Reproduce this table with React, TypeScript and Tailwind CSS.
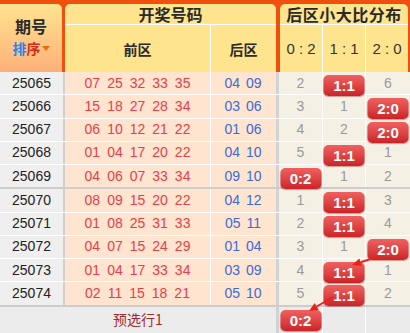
import React from "react";

type Cell = string | number;

interface Row {
  id: string;
  front: string[];
  back: string[];
  dist: Cell[];
}

const rows: Row[] = [
  { id: "25065", front: ["07", "25", "32", "33", "35"], back: ["04", "09"], dist: [2, "1:1", 6] },
  { id: "25066", front: ["15", "18", "27", "28", "34"], back: ["03", "06"], dist: [3, 1, "2:0"] },
  { id: "25067", front: ["06", "10", "12", "21", "22"], back: ["01", "06"], dist: [4, 2, "2:0"] },
  { id: "25068", front: ["01", "04", "17", "20", "22"], back: ["04", "10"], dist: [5, "1:1", 1] },
  { id: "25069", front: ["04", "06", "07", "33", "34"], back: ["09", "10"], dist: ["0:2", 1, 2] },
  { id: "25070", front: ["08", "09", "15", "20", "22"], back: ["04", "12"], dist: [1, "1:1", 3] },
  { id: "25071", front: ["01", "08", "25", "31", "33"], back: ["05", "11"], dist: [2, "1:1", 4] },
  { id: "25072", front: ["04", "07", "15", "24", "29"], back: ["01", "04"], dist: [3, 1, "2:0"] },
  { id: "25073", front: ["01", "04", "17", "33", "34"], back: ["03", "09"], dist: [4, "1:1", 1] },
  { id: "25074", front: ["02", "11", "15", "18", "21"], back: ["05", "10"], dist: [5, "1:1", 2] },
];

function Badge({ text }: { text: string }) {
  return (
    <span className="absolute left-1/2 top-[3px] z-10 flex h-[21px] w-[41px] -translate-x-1/2 items-center justify-center rounded-[5px] bg-linear-to-b from-[#f0605f] to-[#cb2228] text-[15px] font-bold leading-none text-white shadow-[0_1px_1px_rgba(120,0,0,0.35)]">
      {text}
    </span>
  );
}

function DistCell({ value, className }: { value: Cell; className: string }) {
  const isBadge = typeof value === "string" && value.includes(":");
  return (
    <div className={`relative flex items-center justify-center text-[14px] text-[#9a9a9a] ${className}`}>
      {isBadge ? <Badge text={value as string} /> : value}
    </div>
  );
}

export default function App() {
  return (
    <div className="relative h-[333px] w-[410px] overflow-hidden bg-white font-['Liberation_Sans','Noto_Sans_CJK_SC',sans-serif]">
      {/* 表頭 */}
      <div className="flex h-[72px] bg-[#f04f0d] pt-[4px]">
        <div className="mr-[3px] flex w-[62px] flex-col items-center rounded-tr-[5px] bg-linear-to-b from-[#ffe48e] to-[#fdb07a] pt-[10px] font-['Noto_Sans_CJK_SC',sans-serif]">
          <div className="text-[16px] font-bold text-[#2a2a2a]">期号</div>
          <div className="flex items-center text-[14px] font-bold">
            <span className="text-[#1e88f0]">排</span>
            <span className="text-[#d42a1e]">序</span>
            <span className="ml-[1px] h-0 w-0 border-x-[4px] border-t-[5px] border-x-transparent border-t-[#f06a10]" />
          </div>
        </div>

        <div className="mr-[4px] flex w-[211px] flex-col rounded-t-[5px] bg-[#ffe48e]">
          <div className="flex h-[21px] items-center justify-center border-b border-white text-[16px] font-bold text-[#2a2a2a] font-['Noto_Sans_CJK_SC',sans-serif]">
            开奖号码
          </div>
          <div className="flex flex-1 text-[14px] font-bold text-[#2a2a2a] font-['Noto_Sans_CJK_SC',sans-serif]">
            <div className="flex w-[146px] items-center justify-center border-r border-white pt-[2px]">前区</div>
            <div className="flex flex-1 items-center justify-center pt-[2px]">后区</div>
          </div>
        </div>

        <div className="flex w-[128px] flex-col rounded-t-[5px] bg-[#ffe48e]">
          <div className="flex h-[21px] items-center justify-center border-b border-white text-[16px] font-bold tracking-[0.5px] text-[#2a2a2a] font-['Noto_Sans_CJK_SC',sans-serif]">
            后区小大比分布
          </div>
          <div className="flex flex-1 text-[15px] text-[#333]">
            <div className="flex w-[43px] items-center justify-center border-r border-white pt-[2px]">0 : 2</div>
            <div className="flex w-[43px] items-center justify-center border-r border-white pt-[2px]">1 : 1</div>
            <div className="flex flex-1 items-center justify-center pt-[2px]">2 : 0</div>
          </div>
        </div>
      </div>

      {/* 資料列 */}
      {rows.map((row, index) => {
        const groupEnd = index % 5 === 4;
        return (
          <div
            key={row.id}
            className={`flex ${groupEnd ? "h-[24.25px] border-b-2 border-[#cdcdcd]" : "h-[23.25px] border-b border-white"}`}
          >
            <div className="flex w-[65px] items-center justify-center border-r-2 border-[#cfcfcf] bg-[#efefef] text-[14px] text-[#222]">
              {row.id}
            </div>
            <div className="flex w-[146px] items-center justify-center gap-[7px] border-r border-white bg-[#ffe4d0] text-[14px] text-[#e5404a]">
              {row.front.map((n, i) => (
                <span key={i}>{n}</span>
              ))}
            </div>
            <div className="flex w-[68px] items-center justify-center gap-[6px] border-r-[3px] border-[#d2d2d2] bg-[#ffe4d0] pr-[1px] text-[14px] text-[#3a6cd4]">
              {row.back.map((n, i) => (
                <span key={i}>{n}</span>
              ))}
            </div>
            <DistCell value={row.dist[0]} className="w-[44px] border-r border-white bg-[#f5f0e4]" />
            <DistCell value={row.dist[1]} className="w-[43px] border-r border-white bg-[#f5f0e4]" />
            <DistCell value={row.dist[2]} className="flex-1 bg-[#f5f0e4]" />
          </div>
        );
      })}

      {/* 預選行 */}
      <div className="flex h-[27px]">
        <div className="flex w-[276px] items-center justify-center bg-[#ececec] pb-[2px] text-[14px] text-[#a52a2a] font-['Noto_Sans_CJK_SC',sans-serif]">
          预选行1
        </div>
        <div className="w-[3px] bg-[#d2d2d2]" />
        <DistCell value="0:2" className="w-[44px] border-r border-white bg-[#ebebeb]" />
        <DistCell value="" className="w-[43px] border-r border-white bg-[#ebebeb]" />
        <DistCell value="" className="flex-1 bg-[#ebebeb]" />
      </div>

      {/* 走勢箭頭 */}
      <svg className="pointer-events-none absolute inset-0 z-20" width="410" height="333" viewBox="0 0 410 333">
        <line x1="380" y1="256" x2="360.6" y2="262.2" stroke="#e8231f" strokeWidth="2" />
        <polygon points="352,265 361.8,266 359.4,258.4" fill="#e8231f" />
        <line x1="333" y1="297" x2="316.8" y2="306.5" stroke="#e8231f" strokeWidth="2" />
        <polygon points="309,311 318.8,309.9 314.7,303" fill="#e8231f" />
      </svg>
    </div>
  );
}
